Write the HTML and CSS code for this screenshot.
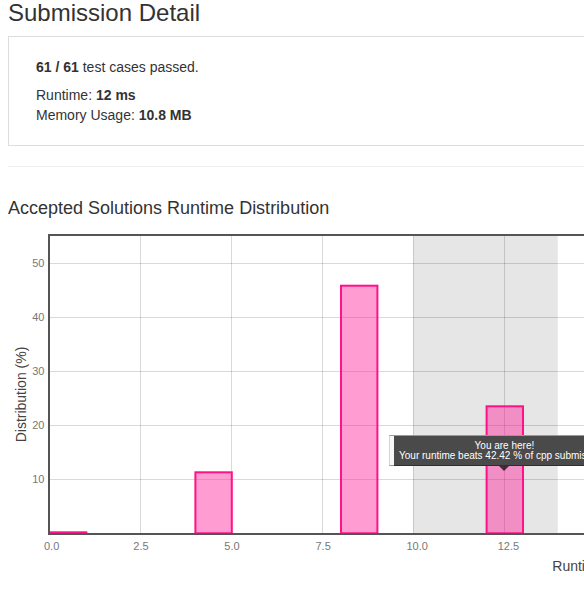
FILE: index.html
```html
<!DOCTYPE html>
<html lang="en">
<head>
<meta charset="utf-8">
<title>Submission Detail</title>
<link rel="stylesheet" href="styles.css">
</head>
<body>
<main class="page">
  <h3 class="title">Submission Detail</h3>
  <div class="card">
    <p class="passed"><strong>61 / 61</strong> test cases passed.</p>
    <p class="stat">Runtime: <strong>12 ms</strong></p>
    <p class="stat">Memory Usage: <strong>10.8 MB</strong></p>
  </div>
  <hr class="divider">
  <h3 class="section-title">Accepted Solutions Runtime Distribution</h3>
</main>
<section class="chart">
  <svg class="chart-svg" width="1000" height="364" viewBox="0 0 1000 364" xmlns="http://www.w3.org/2000/svg">
    <!-- highlighted range 10..14 -->
    <rect x="413.3" y="11" width="144.4" height="297" fill="#e6e6e6"/>
    <!-- grid -->
    <g fill="rgba(0,0,0,0.15)">
      <rect x="140" y="11" width="1" height="297"/>
      <rect x="231" y="11" width="1" height="297"/>
      <rect x="322" y="11" width="1" height="297"/>
      <rect x="413" y="11" width="1" height="297"/>
      <rect x="504" y="11" width="1" height="297"/>
      <rect x="50" y="38" width="950" height="1"/>
      <rect x="50" y="92" width="950" height="1"/>
      <rect x="50" y="146" width="950" height="1"/>
      <rect x="50" y="200" width="950" height="1"/>
      <rect x="50" y="254" width="950" height="1"/>
    </g>
    <!-- bars -->
    <g class="bars" fill="rgba(255,30,150,0.44)" stroke="#ff1188" stroke-width="2">
      <rect x="50" y="307.3" width="36.4" height="1"/>
      <rect x="195.4" y="247.3" width="36.4" height="61"/>
      <rect x="341" y="60.7" width="36.4" height="247.6"/>
      <rect x="486.6" y="181.3" width="36.4" height="127"/>
    </g>
    <!-- axes -->
    <g fill="#555">
      <rect x="48" y="9" width="952" height="2"/>
      <rect x="48" y="9" width="2" height="301"/>
      <rect x="48" y="308" width="952" height="2"/>
    </g>
    <!-- y ticks -->
    <g class="tick" text-anchor="end">
      <text x="44.5" y="42">50</text>
      <text x="44.5" y="96">40</text>
      <text x="44.5" y="150">30</text>
      <text x="44.5" y="204">20</text>
      <text x="44.5" y="258">10</text>
    </g>
    <!-- x ticks -->
    <g class="tick">
      <text x="44" y="325">0.0</text>
      <text x="133.3" y="325">2.5</text>
      <text x="224.3" y="325">5.0</text>
      <text x="315.5" y="325">7.5</text>
      <text x="406.5" y="325">10.0</text>
      <text x="497.7" y="325">12.5</text>
    </g>
    <text class="axis-label" x="25.5" y="169.5" text-anchor="middle" transform="rotate(-90 25.5 169.5)">Distribution (%)</text>
    <text class="axis-label" x="552.3" y="346">Runtime (ms)</text>
  </svg>
  <div class="ghost-tip"></div>
  <div class="tooltip">
    <div>You are here!</div>
    <div>Your runtime beats 42.42 % of cpp submissions</div>
  </div>
</section>
</body>
</html>
```

FILE: styles.css
```css
html, body {
  margin: 0;
  padding: 0;
  overflow: hidden;
  background: #fff;
}

body {
  width: 1000px;
  font-family: "Liberation Sans", Arial, sans-serif;
  color: #333;
}

.page {
  padding: 0 0 0 8px;
}

.title {
  margin: 0;
  font-size: 24px;
  line-height: 26px;
  font-weight: normal;
  color: #333;
}

.card {
  margin-top: 10px;
  border: 1px solid #dddddd;
  padding: 20px 27px;
  font-size: 14px;
  line-height: 20px;
}

.card p {
  margin: 0;
}

.card .passed {
  margin-bottom: 8px;
}

.divider {
  margin: 20px 0 0 0;
  border: 0;
  border-top: 1px solid #eeeeee;
  height: 0;
}

.section-title {
  margin: 31px 0 0 0;
  font-size: 18px;
  line-height: 20px;
  font-weight: normal;
  color: #333;
}

.chart {
  position: relative;
  margin-top: 7px;
  height: 364px;
}

.chart-svg {
  display: block;
}

.tick {
  font-family: "Liberation Sans", Arial, sans-serif;
  font-size: 11px;
  fill: #777;
}

.axis-label {
  font-family: "Liberation Sans", Arial, sans-serif;
  font-size: 14px;
  fill: #444;
}

.ghost-tip {
  position: absolute;
  left: 389px;
  top: 210px;
  width: 230px;
  height: 31px;
  background: #f8f8f8;
  border: 1px solid #999;
  border-left-color: #d4d4d4;
  box-sizing: border-box;
}

.tooltip {
  position: absolute;
  left: 394px;
  top: 211px;
  padding: 5px 5px 5px;
  background: rgba(0, 0, 0, 0.7);
  color: #fff;
  font-size: 10px;
  line-height: 10px;
  text-align: center;
  white-space: nowrap;
}

.tooltip::after {
  content: "";
  position: absolute;
  left: 50%;
  bottom: -5px;
  margin-left: -5px;
  border-left: 5px solid transparent;
  border-right: 5px solid transparent;
  border-top: 5px solid rgba(0, 0, 0, 0.7);
}
```
